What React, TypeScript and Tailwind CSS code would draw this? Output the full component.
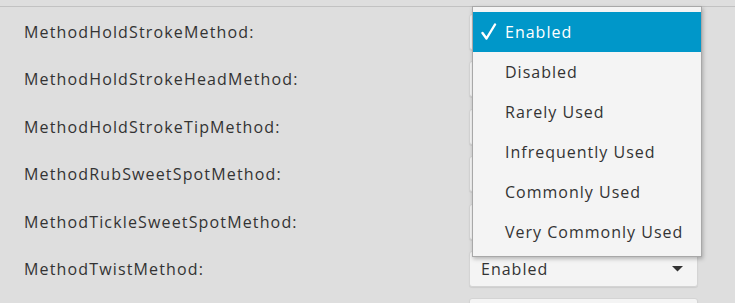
import React from "react";

const labels = [
  "MethodHoldStrokeMethod:",
  "MethodHoldStrokeHeadMethod:",
  "MethodHoldStrokeTipMethod:",
  "MethodRubSweetSpotMethod:",
  "MethodTickleSweetSpotMethod:",
  "MethodTwistMethod:",
  "",
];

const options = [
  "Enabled",
  "Disabled",
  "Rarely Used",
  "Infrequently Used",
  "Commonly Used",
  "Very Commonly Used",
];

function Arrow() {
  return (
    <svg width="11" height="6" viewBox="0 0 11 6">
      <path d="M0 0 L11 0 L5.5 5.5 Z" fill="#333" />
    </svg>
  );
}

function Check() {
  return (
    <svg width="16" height="18" viewBox="0 0 16 18">
      <path d="M1.5 10 L5.5 15.5 L14 1.5" fill="none" stroke="white" strokeWidth="2.4" strokeLinecap="round" strokeLinejoin="round" />
    </svg>
  );
}

export default function App() {
  return (
    <div
      className="relative w-[735px] h-[303px] overflow-hidden bg-[#dedede] text-[#333333]"
      style={{ fontFamily: '"Open Sans", "Noto Sans", sans-serif' }}
    >
      <div className="h-[6px] bg-[#dedede]" />
      <div className="h-px bg-[#c2c2c2]" />
      <div className="flex flex-col gap-[11.4px] pt-[7px]">
        {labels.map((l, i) => (
          <div key={i} className="flex items-center h-[36px]">
            <div className="w-[469px] pl-[24px] text-[16px] leading-none tracking-[1.15px]">{l}</div>
            <div className="w-[229px] h-[36px] rounded-[3px] bg-[#f4f4f4] border border-[#d4d4d4] shadow-[0_1px_1px_rgba(0,0,0,0.08)] flex items-center justify-between pl-[11px] pr-[14px] text-[16px] tracking-[1px]">
              <span>{i < 6 ? "Enabled" : ""}</span>
              <Arrow />
            </div>
          </div>
        ))}
      </div>
      <div className="absolute left-[472px] top-[6px] w-[230px] bg-[#f4f4f4] border border-[#a8a8a8] shadow-[1px_2px_4px_rgba(0,0,0,0.25)] pt-[5px] pb-[4px] tracking-[1px]">
        {options.map((o, i) => (
          <div
            key={o}
            className={
              "h-[40px] flex items-center text-[16px] " +
              (i === 0 ? "bg-[#0097c9] text-white" : "text-[#333333]")
            }
          >
            <span className="w-[32px] pl-[8px] flex items-center">{i === 0 ? <Check /> : null}</span>
            <span>{o}</span>
          </div>
        ))}
      </div>
    </div>
  );
}
